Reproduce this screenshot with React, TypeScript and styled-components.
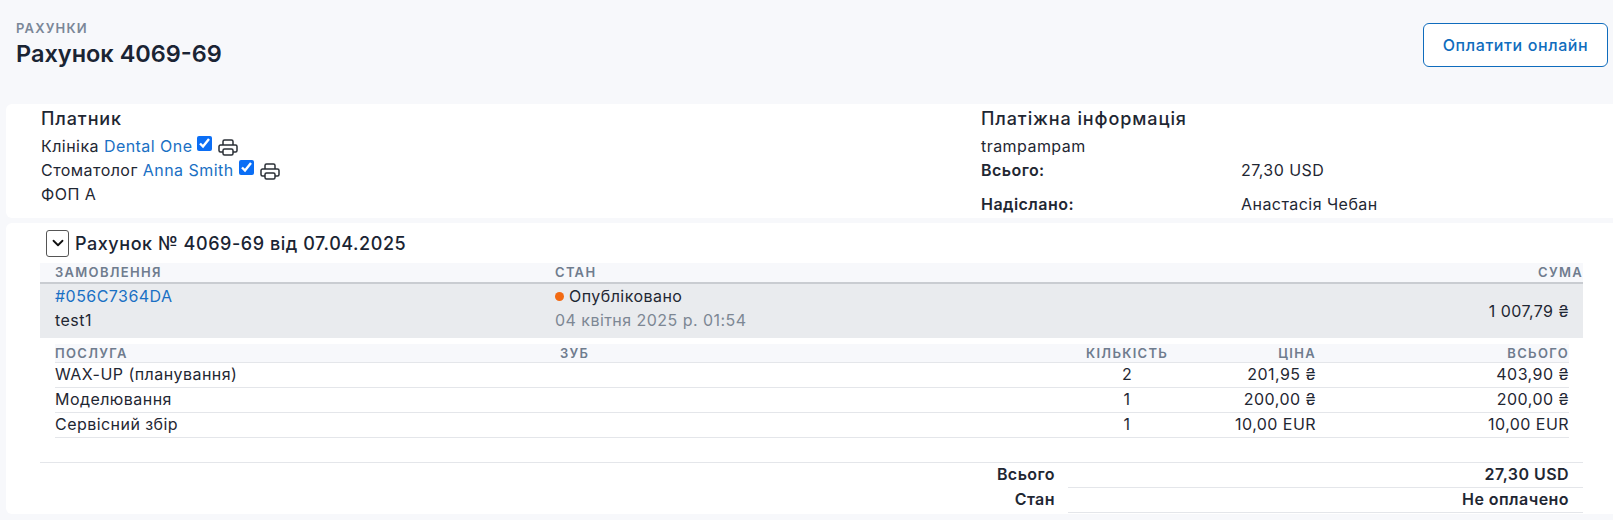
import styled, { createGlobalStyle } from "styled-components";
import { ChevronDown } from "lucide-react";

const services = [
  { name: "WAX-UP (планування)", qty: 2, price: "201,95 ₴", total: "403,90 ₴" },
  { name: "Моделювання", qty: 1, price: "200,00 ₴", total: "200,00 ₴" },
  { name: "Сервісний збір", qty: 1, price: "10,00 EUR", total: "10,00 EUR" },
];

const PrinterIcon = () => (
  <PrintSvg viewBox="0 0 20 17" fill="none" stroke="currentColor" strokeWidth="1.5">
    <path d="M5 6V2.5A1.5 1.5 0 0 1 6.5 1h7A1.5 1.5 0 0 1 15 2.5V6" />
    <path d="M5 13H2.5A1.5 1.5 0 0 1 1 11.5v-4A1.5 1.5 0 0 1 2.5 6h15A1.5 1.5 0 0 1 19 7.5v4a1.5 1.5 0 0 1-1.5 1.5H15" />
    <rect x="5" y="10" width="10" height="6" rx="1.5" />
  </PrintSvg>
);

const App = () => {
  return (
    <>
      <GlobalStyle />
      <Page>
        <Header>
          <div>
            <Crumb>Рахунки</Crumb>
            <Title>Рахунок 4069-69</Title>
          </div>
          <PayButton>Оплатити онлайн</PayButton>
        </Header>

        <InfoCard>
          <Payer>
            <SectionTitle>Платник</SectionTitle>
            <InfoLine>
              Клініка <BlueLink>Dental One</BlueLink>
              <Check type="checkbox" checked readOnly />
              <PrinterIcon />
            </InfoLine>
            <InfoLine>
              Стоматолог <BlueLink>Anna Smith</BlueLink>
              <Check type="checkbox" checked readOnly />
              <PrinterIcon />
            </InfoLine>
            <InfoLine>ФОП А</InfoLine>
          </Payer>
          <Payment>
            <SectionTitle>Платіжна інформація</SectionTitle>
            <InfoLine>trampampam</InfoLine>
            <PayRow>
              <strong>Всього:</strong>
              <span>27,30 USD</span>
            </PayRow>
            <PayRow $spaced>
              <strong>Надіслано:</strong>
              <span>Анастасія Чебан</span>
            </PayRow>
          </Payment>
        </InfoCard>

        <InvoiceCard>
          <InvoiceTitle>
            <ToggleButton>
              <ChevronDown size={18} strokeWidth={2.4} />
            </ToggleButton>
            Рахунок № 4069-69 від 07.04.2025
          </InvoiceTitle>

          <OrderHead>
            <span>Замовлення</span>
            <span>Стан</span>
            <RightCell>Сума</RightCell>
          </OrderHead>
          <OrderRow>
            <div>
              <OrderLine>
                <BlueLink>#056C7364DA</BlueLink>
              </OrderLine>
              <OrderLine>test1</OrderLine>
            </div>
            <div>
              <OrderLine>
                <Dot />
                Опубліковано
              </OrderLine>
              <OrderLine $muted>04 квітня 2025 р. 01:54</OrderLine>
            </div>
            <OrderAmount>1 007,79 ₴</OrderAmount>
          </OrderRow>

          <ServiceHead>
            <span>Послуга</span>
            <span>Зуб</span>
            <span>Кількість</span>
            <RightCell>Ціна</RightCell>
            <RightCell>Всього</RightCell>
          </ServiceHead>
          {services.map((s) => (
            <ServiceRow key={s.name}>
              <span>{s.name}</span>
              <span />
              <QtyCell>{s.qty}</QtyCell>
              <RightCell>{s.price}</RightCell>
              <RightCell>{s.total}</RightCell>
            </ServiceRow>
          ))}

          <Totals>
            <TotalRow>
              <TotalLabel>Всього</TotalLabel>
              <TotalValue>27,30 USD</TotalValue>
            </TotalRow>
            <TotalRow>
              <TotalLabel>Стан</TotalLabel>
              <TotalValue>Не оплачено</TotalValue>
            </TotalRow>
          </Totals>
        </InvoiceCard>
      </Page>
    </>
  );
};

const GlobalStyle = createGlobalStyle`
  html, body {
    margin: 0;
    background: #f7f8fb;
  }
  body {
    font-family: Inter, "Noto Sans", sans-serif;
    font-size: 16px;
    letter-spacing: 0.45px;
    color: #1f2733;
  }
`;

const Page = styled.div`
  width: 1613px;
  height: 520px;
  overflow: hidden;
`;

const Header = styled.header`
  height: 104px;
  padding: 20px 5px 0 16px;
  box-sizing: border-box;
  display: flex;
  justify-content: space-between;
  align-items: flex-start;
`;

const Crumb = styled.div`
  font-size: 13px;
  line-height: 16px;
  font-weight: 600;
  letter-spacing: 0.09em;
  text-transform: uppercase;
  color: #7b8798;
`;

const Title = styled.h1`
  margin: 3px 0 0;
  font-size: 23.5px;
  line-height: 30px;
  font-weight: 600;
  letter-spacing: 0;
  color: #1a2433;
`;

const PayButton = styled.button`
  width: 185px;
  height: 44px;
  margin-top: 3px;
  background: #fff;
  border: 1px solid #0f6cbd;
  border-radius: 6px;
  font: 500 16px Inter, sans-serif;
  letter-spacing: 0.6px;
  color: #0f6cbd;
`;

const InfoCard = styled.section`
  margin-left: 6px;
  height: 114px;
  padding: 0 0 0 35px;
  background: #fff;
  border-radius: 6px 0 0 6px;
  display: flex;
`;

const Payer = styled.div`
  width: 940px;
`;

const Payment = styled.div`
  flex: 1;
`;

const SectionTitle = styled.h2`
  margin: 0;
  font-size: 18px;
  line-height: 30px;
  font-weight: 500;
  letter-spacing: 0.9px;
`;

const InfoLine = styled.div`
  height: 24px;
  line-height: 24px;
  display: flex;
  align-items: center;
  white-space: pre;
`;

const BlueLink = styled.a`
  color: #1a70c4;
`;

const Check = styled.input`
  width: 15px;
  height: 15px;
  margin: 0 0 5px 5px;
  accent-color: #0b6ef5;
`;

const PrintSvg = styled.svg`
  width: 20px;
  height: 17px;
  margin: 2px 0 0 6px;
  color: #2a2f36;
`;

const PayRow = styled.div<{ $spaced?: boolean }>`
  display: grid;
  grid-template-columns: 260px 1fr;
  height: 24px;
  margin-top: ${(p) => (p.$spaced ? "10px" : "0")};
  line-height: 24px;
  strong {
    font-weight: 600;
  }
`;

const InvoiceCard = styled.section`
  margin: 5px 0 0 6px;
  height: 291px;
  padding-right: 30px;
  background: #fff;
  border-radius: 6px 0 0 6px;
`;

const InvoiceTitle = styled.div`
  height: 40px;
  padding-left: 40px;
  display: flex;
  align-items: center;
  font-size: 18px;
  font-weight: 500;
  letter-spacing: 0.55px;
  color: #1a2433;
`;

const ToggleButton = styled.button`
  width: 23px;
  height: 27px;
  padding: 0;
  margin: 0 6px 0 0;
  display: flex;
  align-items: center;
  justify-content: center;
  background: #fff;
  border: 1px solid #555;
  border-radius: 3px;
  color: #111;
`;

const headText = `
  font-size: 13px;
  font-weight: 600;
  letter-spacing: 0.1em;
  text-transform: uppercase;
  color: #6f7c8e;
`;

const OrderHead = styled.div`
  ${headText}
  margin-left: 34px;
  height: 19px;
  line-height: 19px;
  padding: 0 0 0 15px;
  display: grid;
  grid-template-columns: 500px 1fr auto;
  background: #f7f8fb;
  border-bottom: 2px solid #c9ccd1;
`;

const OrderRow = styled.div`
  margin-left: 34px;
  height: 54px;
  padding: 0 14px 0 15px;
  display: grid;
  grid-template-columns: 500px 1fr auto;
  background: #e9ebee;
`;

const OrderLine = styled.div<{ $muted?: boolean }>`
  height: 24px;
  line-height: 22px;
  display: flex;
  align-items: center;
  color: ${(p) => (p.$muted ? "#7d8794" : "#1f2733")};
`;

const OrderAmount = styled.div`
  align-self: center;
  text-align: right;
`;

const Dot = styled.span`
  width: 9px;
  height: 9px;
  margin-right: 5px;
  border-radius: 50%;
  background: #f26a12;
`;

const serviceColumns = "505px 1fr 82px 148px 253px";

const ServiceHead = styled.div`
  ${headText}
  margin: 6px 14px 0 49px;
  height: 18px;
  line-height: 18px;
  display: grid;
  grid-template-columns: ${serviceColumns};
  background: #f7f8fb;
  border-bottom: 1px solid #e4e6ea;
`;

const ServiceRow = styled.div`
  margin: 0 14px 0 49px;
  height: 24px;
  line-height: 22px;
  display: grid;
  grid-template-columns: ${serviceColumns};
  border-bottom: 1px solid #e4e6ea;
`;

const QtyCell = styled.span`
  text-align: center;
`;

const RightCell = styled.span`
  text-align: right;
`;

const Totals = styled.div`
  margin: 24px 0 0 34px;
  border-top: 1px solid #e4e6ea;
`;

const TotalRow = styled.div`
  display: grid;
  grid-template-columns: 1015px 1fr;
  column-gap: 13px;
  height: 25px;
  line-height: 23px;
  font-weight: 600;
`;

const TotalLabel = styled.div`
  text-align: right;
`;

const TotalValue = styled.div`
  padding-right: 14px;
  text-align: right;
  border-bottom: 1px solid #e4e6ea;
`;

export default App;
